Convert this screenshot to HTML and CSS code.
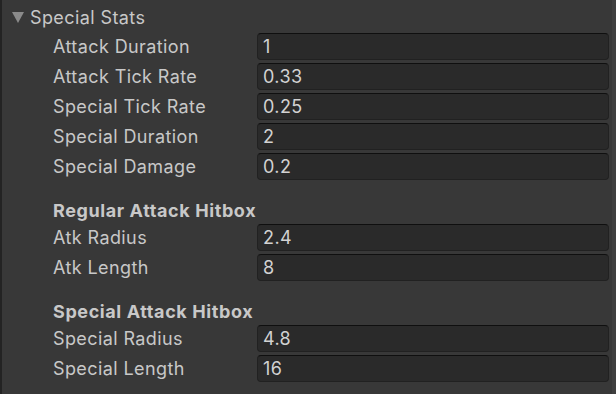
FILE: index.html
```html
<!DOCTYPE html>
<html>
<head>
<meta charset="utf-8">
<link rel="stylesheet" href="styles.css">
</head>
<body>
<div class="panel">
  <div class="inner">
    <div class="foldout">
      <span class="tri"></span>
      <span class="foldout-label">Special Stats</span>
    </div>
    <div class="group">
      <div class="row"><span class="label">Attack Duration</span><span class="field">1</span></div>
      <div class="row"><span class="label">Attack Tick Rate</span><span class="field">0.33</span></div>
      <div class="row"><span class="label">Special Tick Rate</span><span class="field">0.25</span></div>
      <div class="row"><span class="label">Special Duration</span><span class="field">2</span></div>
      <div class="row"><span class="label">Special Damage</span><span class="field">0.2</span></div>
      <div class="heading">Regular Attack Hitbox</div>
      <div class="row"><span class="label">Atk Radius</span><span class="field">2.4</span></div>
      <div class="row"><span class="label">Atk Length</span><span class="field">8</span></div>
      <div class="heading">Special Attack Hitbox</div>
      <div class="row"><span class="label">Special Radius</span><span class="field">4.8</span></div>
      <div class="row"><span class="label">Special Length</span><span class="field">16</span></div>
    </div>
  </div>
  <div class="edge"></div>
</div>
</body>
</html>
```

FILE: styles.css
```css
html, body {
  margin: 0;
  padding: 0;
  background: #383838;
}
body {
  width: 616px;
  height: 394px;
  overflow: hidden;
  font-family: Inter, "Noto Sans", sans-serif;
  font-size: 18px;
  letter-spacing: 0.4px;
  color: #c8c8c8;
}
.panel {
  display: flex;
  height: 394px;
  border-left: 2px solid #232323;
  box-sizing: border-box;
}
.inner {
  flex: 1;
  padding-top: 4px;
}
.edge {
  width: 4px;
  background: #3f3f3f;
}
.foldout {
  height: 27px;
  display: flex;
  align-items: center;
  margin-bottom: 2px;
}
.tri {
  width: 0;
  height: 0;
  margin-left: 10px;
  margin-right: 6px;
  border-left: 6.5px solid transparent;
  border-right: 6.5px solid transparent;
  border-top: 11px solid #8a8a8a;
}
.foldout-label {
  line-height: 27px;
}
.group {
  padding-left: 51px;
  padding-right: 3px;
}
.row {
  display: flex;
  align-items: center;
  height: 27px;
  margin-bottom: 3px;
}
.label {
  width: 204px;
  flex: none;
}
.field {
  flex: 1;
  height: 27px;
  box-sizing: border-box;
  background: #2a2a2a;
  border: 1px solid #212121;
  border-top-color: #0f0f0f;
  border-radius: 4px;
  padding-left: 5px;
  display: flex;
  align-items: center;
  color: #d2d2d2;
}
.heading {
  height: 27px;
  line-height: 27px;
  margin-top: 17px;
  font-weight: bold;
  letter-spacing: 0.6px;
}
```
